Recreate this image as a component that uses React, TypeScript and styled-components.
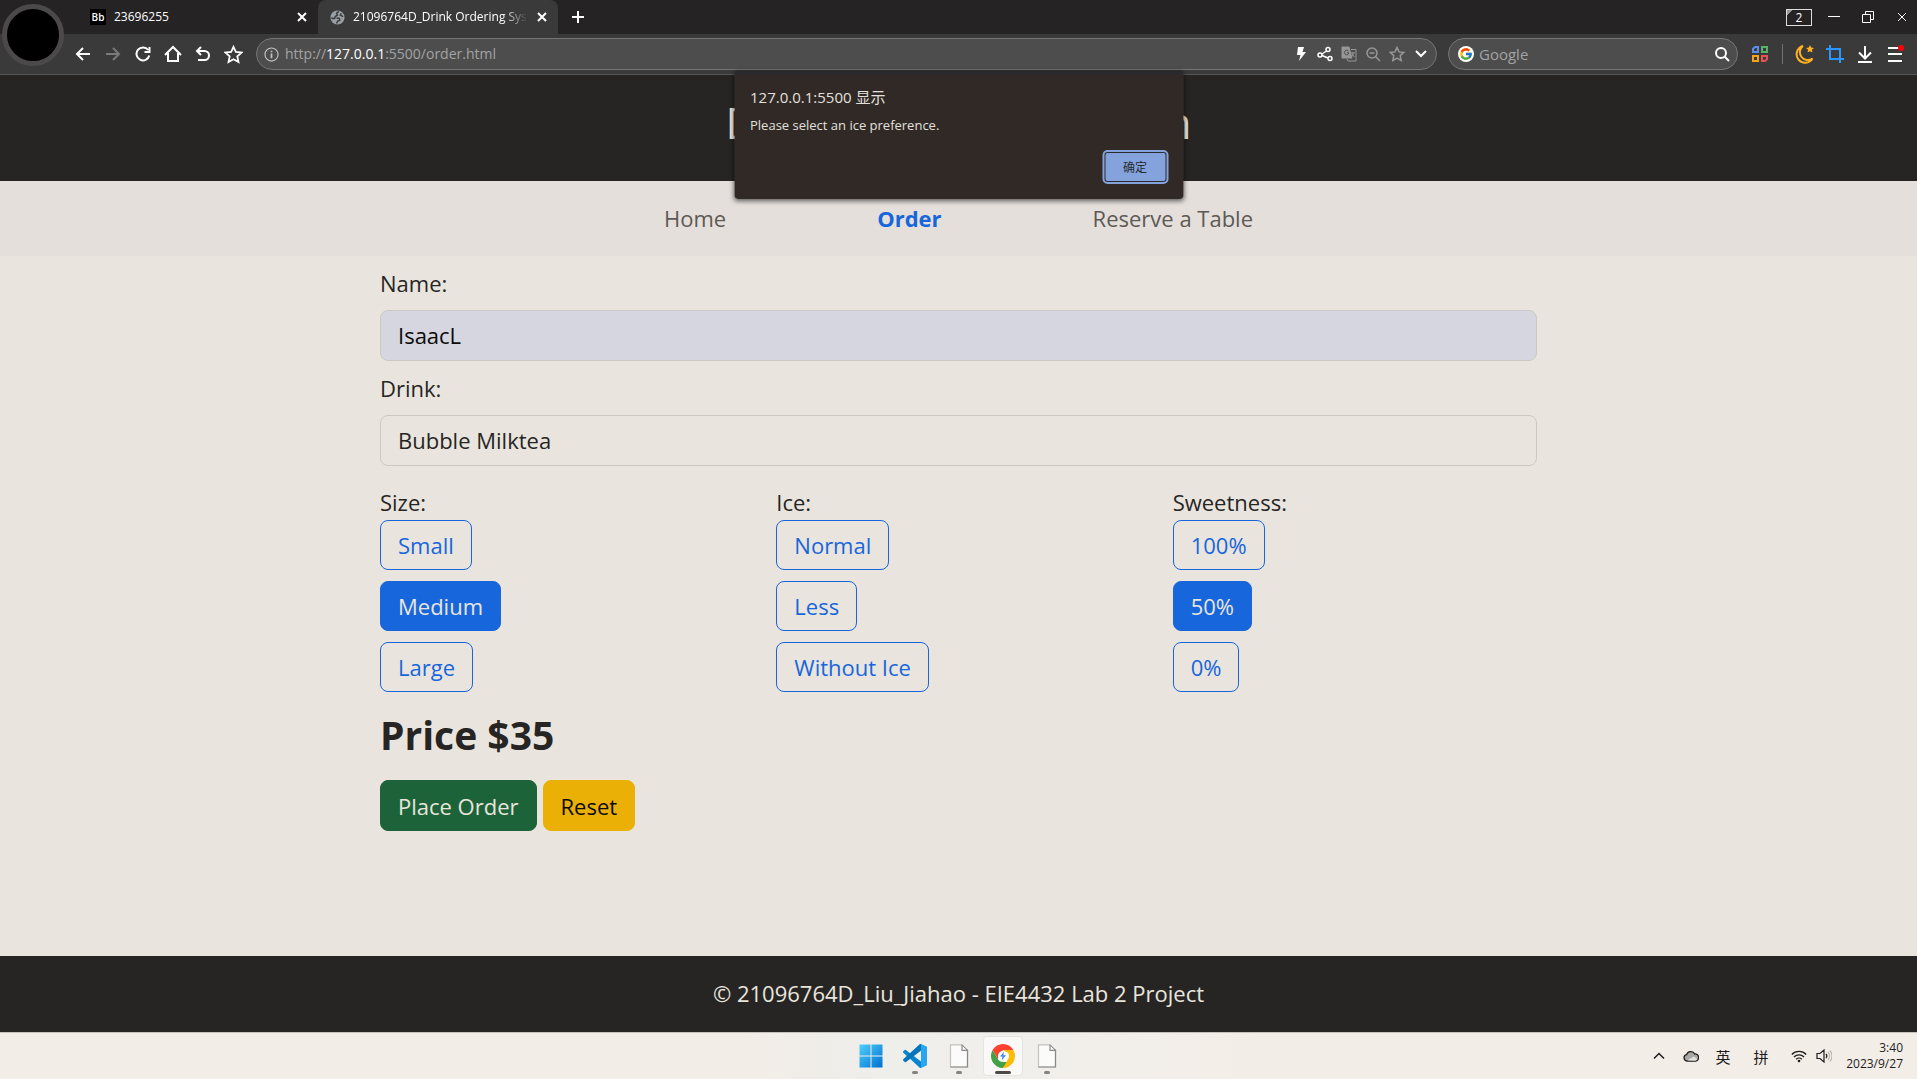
import React, { useState } from "react";
import styled, { createGlobalStyle, css } from "styled-components";
import { FcGoogle } from "react-icons/fc";

const uiFont = `"Open Sans", "Noto Sans CJK SC", sans-serif`;

const GlobalStyle = createGlobalStyle`
  *, *::before, *::after { box-sizing: border-box; }
  body { margin: 0; background: #e9e5de; font-family: ${uiFont}; }
  h1, h2, p { margin: 0; }
  button, input, select { font-family: inherit; }
`;

const Screen = styled.div`
  display: flex;
  flex-direction: column;
  min-height: 100vh;
`;

/* ---------- browser chrome ---------- */

const Browser = styled.header`
  position: relative;
  flex: none;
  color: #fff;
  background: #3a3a3a;
  border-bottom: 1px solid #555;
`;

const Avatar = styled.button`
  position: absolute;
  left: 2px;
  top: 4px;
  z-index: 1;
  width: 62px;
  height: 62px;
  padding: 0;
  border: 5px solid #4b4949;
  border-radius: 50%;
  background: #000;
`;

const TabStrip = styled.div`
  display: flex;
  align-items: stretch;
  height: 34px;
  padding-left: 80px;
  background: #252323;
`;

const Tab = styled.div<{ $active?: boolean }>`
  display: flex;
  align-items: center;
  gap: 8px;
  width: ${(p) => (p.$active ? 240 : 238)}px;
  padding: 0 10px 0 ${(p) => (p.$active ? 12 : 10)}px;
  border-radius: 8px 8px 0 0;
  background: ${(p) => (p.$active ? "#3a3a3a" : "transparent")};
`;

const TabTitle = styled.span<{ $fade?: boolean }>`
  flex: 1;
  overflow: hidden;
  white-space: nowrap;
  font-size: 12px;
  line-height: 16px;
  ${(p) =>
    p.$fade &&
    css`
      mask-image: linear-gradient(to right, #000 85%, transparent);
    `}
`;

const Badge = styled.span`
  width: 16px;
  height: 16px;
  background: #000;
  font-size: 10px;
  font-weight: 600;
  line-height: 16px;
  text-align: center;
`;

const IconButton = styled.button<{ $w?: number; $color?: string }>`
  display: flex;
  flex: none;
  align-items: center;
  justify-content: center;
  width: ${(p) => p.$w ?? 30}px;
  height: 30px;
  padding: 0;
  border: 0;
  background: none;
  color: ${(p) => p.$color ?? "#fff"};
`;

const TabClose = styled(IconButton)`
  width: 12px;
  height: 12px;
`;

const NewTab = styled(IconButton)`
  margin-left: 5px;
  height: 34px;
`;

const WindowControls = styled.div`
  display: flex;
  align-items: center;
  margin-left: auto;
  margin-right: -2px;
`;

const TabCount = styled.button`
  width: 26px;
  height: 17px;
  margin-right: 5px;
  padding: 0;
  border: 1px solid #ddd;
  background: linear-gradient(135deg, #999 4px, transparent 4px);
  color: #fff;
  font-size: 12px;
  line-height: 15px;
`;

const Toolbar = styled.div`
  display: flex;
  align-items: center;
  height: 40px;
  padding: 0 7px 0 68px;
`;

const Pill = styled.div<{ $grow?: boolean }>`
  display: flex;
  align-items: center;
  flex: ${(p) => (p.$grow ? "1" : "0 0 290px")};
  height: 32px;
  margin-left: ${(p) => (p.$grow ? 8 : 11)}px;
  padding: 0 3px 0 ${(p) => (p.$grow ? 7 : 9)}px;
  border: 1px solid #757575;
  border-radius: 16px;
  background: #4d4d4d;
`;

const Address = styled.a`
  flex: 1;
  margin-left: 6px;
  color: #a3a3a3;
  font-size: 14px;
  line-height: 20px;
  text-decoration: none;
`;

const Host = styled.span`
  color: #fff;
`;

const SearchBox = styled.input`
  flex: 1;
  min-width: 0;
  padding: 0 0 0 5px;
  border: 0;
  outline: 0;
  background: none;
  color: #fff;
  font-size: 15px;
  line-height: 20px;
  &::placeholder { color: #a3a3a3; opacity: 1; }
`;

const GoogleDisc = styled.span`
  display: flex;
  align-items: center;
  justify-content: center;
  width: 16px;
  height: 16px;
  border-radius: 50%;
  background: #fff;
`;

const Divider = styled.span`
  width: 1px;
  height: 20px;
  margin: 0 7px 0 1px;
  background: #707070;
`;

/* ---------- alert ---------- */

const Alert = styled.div`
  position: absolute;
  top: 70px;
  left: 50%;
  z-index: 5;
  display: flex;
  flex-direction: column;
  width: 449px;
  height: 129px;
  padding: 15px 17px 15px 16px;
  transform: translateX(-50%);
  border-radius: 4px;
  background: linear-gradient(#2a2a2c 5px, #302926 5px);
  box-shadow: 0 2px 5px rgba(0, 0, 0, 0.6);
  color: #e3e0dc;
`;

const AlertTitle = styled.h2`
  font-size: 15px;
  font-weight: 400;
  line-height: 24px;
`;

const AlertText = styled.p`
  margin-top: 6px;
  font-size: 13px;
  line-height: 20px;
`;

const AlertButton = styled.button`
  align-self: flex-end;
  width: 62px;
  height: 30px;
  margin: 17px 0 0;
  padding: 0;
  border: 1px solid #2b2a2d;
  border-radius: 3px;
  outline: 2px solid #84a3dc;
  background: #84a3dc;
  color: #262a33;
  font-size: 12px;
`;

/* ---------- ordering page ---------- */

const Banner = styled.header`
  display: flex;
  align-items: center;
  justify-content: center;
  height: 106px;
  padding-bottom: 12px;
  background: #272524;
  color: #e9e5de;
`;

const BannerTitle = styled.h1`
  font-size: 44px;
  font-weight: 500;
  line-height: 56px;
`;

const Nav = styled.nav`
  display: flex;
  align-items: center;
  justify-content: center;
  gap: 151px;
  height: 75px;
  padding-bottom: 2px;
  background: #e4dfdb;
`;

const NavLink = styled.a<{ $active?: boolean }>`
  color: ${(p) => (p.$active ? "#1766dc" : "#5d5955")};
  font-size: 22px;
  font-weight: ${(p) => (p.$active ? 700 : 400)};
  line-height: 36px;
  text-decoration: none;
`;

const Main = styled.main`
  flex: 1;
  width: 100%;
  max-width: 1189px;
  margin: 0 auto;
  padding: 9px 16px 32px;
  color: #272524;
`;

const FieldLabel = styled.label`
  display: block;
  margin-bottom: 9px;
  font-size: 22px;
  line-height: 36px;
`;

const control = css`
  display: block;
  width: 100%;
  height: 51px;
  margin-bottom: 9px;
  padding: 0 17px 2px;
  border: 1px solid #cbc9c5;
  border-radius: 8px;
  outline: 0;
  font-size: 22px;
  line-height: 36px;
`;

const TextField = styled.input`
  ${control}
  background: #d5d6df;
  color: #0b0b0b;
`;

const Select = styled.select`
  ${control}
  appearance: none;
  background: transparent;
  color: #272524;
`;

const Groups = styled.div`
  display: grid;
  grid-template-columns: repeat(3, 1fr);
  gap: 32px;
  margin-top: 19px;
`;

const Group = styled.fieldset`
  display: flex;
  flex-direction: column;
  align-items: flex-start;
  gap: 11px;
  min-width: 0;
  margin: 0;
  padding: 0;
  border: 0;
`;

const Legend = styled.legend`
  padding: 0;
  font-size: 22px;
  line-height: 35px;
`;

const HiddenRadio = styled.input`
  position: absolute;
  opacity: 0;
  pointer-events: none;
`;

const buttonShape = css`
  height: 50px;
  padding: 0 17px;
  border-radius: 8px;
  font-size: 22px;
  line-height: 48px;
`;

const Choice = styled.label`
  ${buttonShape}
  border: 1px solid #1766dc;
  color: #1766dc;
  &:has(input:checked) {
    background: #1766dc;
    color: #e9e5de;
  }
`;

const Price = styled.h2`
  margin: 18px 0 20px;
  font-size: 39px;
  font-weight: 700;
  line-height: 50px;
`;

const Actions = styled.div`
  display: flex;
  gap: 6px;
`;

const ActionButton = styled.button<{ $tone: "success" | "warning" }>`
  ${buttonShape}
  height: 51px;
  border: 1px solid ${(p) => (p.$tone === "success" ? "#1d6339" : "#ebb005")};
  background: ${(p) => (p.$tone === "success" ? "#1d6339" : "#ebb005")};
  color: ${(p) => (p.$tone === "success" ? "#e9e5de" : "#0b0b0b")};
`;

const Footer = styled.footer`
  flex: none;
  padding-bottom: 2px;
  background: #272524;
  color: #e9e5de;
  font-size: 22px;
  line-height: 74px;
  text-align: center;
`;

/* ---------- taskbar ---------- */

const Taskbar = styled.div`
  display: grid;
  grid-template-columns: 1fr auto 1fr;
  align-items: center;
  flex: none;
  height: 47px;
  border-top: 1px solid #c4c2be;
  background: linear-gradient(90deg, #f3ede7, #f3ede7 38%, #eeeeea 46%, #f1efeb 54%, #f3ede7 66%, #f3ede7);
  color: #1d1d1d;
`;

const Apps = styled.div`
  display: flex;
  grid-column: 2;
  gap: 4px;
`;

const AppButton = styled.button<{ $active?: boolean; $open?: boolean }>`
  display: flex;
  flex-direction: column;
  align-items: center;
  justify-content: space-between;
  width: 40px;
  height: 40px;
  padding: 7px 0 1px;
  border: 1px solid ${(p) => (p.$active ? "#e6e4e1" : "transparent")};
  border-radius: 4px;
  background: ${(p) => (p.$active ? "#faf9f7" : "none")};
  &::after {
    content: "";
    width: ${(p) => (p.$active ? 16 : 6)}px;
    height: 3px;
    border-radius: 2px;
    background: ${(p) => (p.$active ? "#4a4a4a" : p.$open ? "#858380" : "transparent")};
  }
`;

const Tray = styled.div`
  display: flex;
  align-items: center;
  justify-self: end;
  padding-right: 14px;
  font-size: 15px;
`;

const TrayButton = styled(IconButton)`
  color: #1d1d1d;
  font-size: 15px;
`;

const Clock = styled.time`
  width: 66px;
  margin-left: 4px;
  font-size: 12px;
  line-height: 16px;
  text-align: right;
`;

/* ---------- icons ---------- */

type IconProps = {
  size?: number;
  box?: number;
  sw?: number;
  children: React.ReactNode;
};

const Icon = ({ size = 16, box = 16, sw = 2, children }: IconProps) => (
  <svg
    width={size}
    height={size}
    viewBox={`0 0 ${box} ${box}`}
    fill="none"
    stroke="currentColor"
    strokeWidth={sw}
    aria-hidden="true"
  >
    {children}
  </svg>
);

const Cross = ({ size = 10, sw = 2 }) => (
  <Icon size={size} box={10} sw={sw}>
    <path d="M1 1l8 8M9 1l-8 8" />
  </Icon>
);

const Globe = () => (
  <Icon size={15}>
    <circle cx="8" cy="8" r="7.5" fill="#9aa0a6" stroke="none" />
    <path
      d="M9.500 1.500L7 3.500l1 2-2.500 1.500-.5 2H2.500L1.500 8M7 8.500l3 .5.5 2-2.500 1L7 14.500M12 3.500l-1 2 3 1.500"
      stroke="#3a3a3a"
      strokeWidth="1.500"
    />
  </Icon>
);

const starPath = "M8 1.500l2 4.400 4.800.5-3.600 3.200 1 4.800L8 12l-4.200 2.400 1-4.800L1.200 6.400 6 5.900z";

const WindowsLogo = () => (
  <svg width="24" height="24" viewBox="0 0 24 24" aria-hidden="true">
    <defs>
      <linearGradient id="win" x1="0" y1="0" x2="1" y2="1">
        <stop offset="0" stopColor="#4fd0fb" />
        <stop offset="1" stopColor="#0070d2" />
      </linearGradient>
    </defs>
    <path fill="url(#win)" d="M.5.5h11v11H.5zM12.500.5h11v11h-11zM.5 12.500h11v11H.5zM12.500 12.500h11v11h-11z" />
  </svg>
);

const CodeLogo = () => (
  <svg width="24" height="24" viewBox="0 0 24 24" aria-hidden="true">
    <path
      fill="#0a84cf"
      d="M23.15 2.587L18.21.21a1.494 1.494 0 0 0-1.705.29l-9.46 8.63-4.12-3.128a.999.999 0 0 0-1.276.057L.327 7.261A1 1 0 0 0 .326 8.740L3.899 12 .326 15.260a1 1 0 0 0 .001 1.479L1.650 17.940a.999.999 0 0 0 1.276.057l4.120-3.128 9.460 8.630a1.492 1.492 0 0 0 1.704.290l4.942-2.377A1.500 1.500 0 0 0 24 20.060V3.939a1.500 1.500 0 0 0-.850-1.352zm-5.146 14.861L10.826 12l7.178-5.448v10.896z"
    />
    <path fill="#0065a9" opacity=".5" d="M18.004.15v6.402L10.826 12 3 18 .326 15.260 16.500.5z" />
    <path fill="#2aa5f2" d="M18.004.15l5.146 2.437A1.500 1.500 0 0 1 24 3.939V20.060a1.500 1.500 0 0 1-.850 1.352l-5.146 2.437z" />
  </svg>
);

const FileIcon = () => (
  <svg width="24" height="24" viewBox="0 0 24 24" aria-hidden="true">
    <path d="M3.500.8H15l5.500 5.500V23H3.500z" fill="#fbfbfa" stroke="#c3c2c0" strokeWidth="1.200" />
    <path d="M15 .8v5.500h5.500V23H3.500" fill="none" stroke="#8b8987" strokeWidth="1.200" />
    <path d="M15 .8l5.500 5.500" stroke="#8b8987" />
  </svg>
);

const ChromeLogo = () => (
  <svg width="24" height="24" viewBox="0 0 24 24" aria-hidden="true">
    <path fill="#ff4131" d="M1.608 6A12 12 0 0 1 22.392 6H12L6.800 15z" />
    <path fill="#43a047" d="M1.608 6L6.804 15A6 6 0 0 0 12 18h5.196L12 24A12 12 0 0 1 1.608 6z" />
    <path fill="#fbbc05" d="M22.392 6A12 12 0 0 1 12 24l5.196-9A6 6 0 0 0 17.196 9L12 6z" />
    <circle cx="12" cy="12" r="5" fill="#fff" />
    <path fill="#4285f4" d="M13 7.800l-4 4.700h2.400l-.6 3.700 4.200-5h-2.600z" />
  </svg>
);

const choices = [
  { key: "size", title: "Size:", options: ["Small", "Medium", "Large"], initial: "Medium" },
  { key: "ice", title: "Ice:", options: ["Normal", "Less", "Without Ice"], initial: "" },
  { key: "sweet", title: "Sweetness:", options: ["100%", "50%", "0%"], initial: "50%" },
];

const ChoiceGroup = ({ name, title, options, initial }: { name: string; title: string; options: string[]; initial: string }) => {
  const [value, setValue] = useState(initial);
  return (
    <Group>
      <Legend>{title}</Legend>
      {options.map((o) => (
        <Choice key={o}>
          <HiddenRadio type="radio" name={name} checked={value === o} onChange={() => setValue(o)} />
          {o}
        </Choice>
      ))}
    </Group>
  );
};

const BrowserChrome = () => (
  <Browser>
    <Avatar aria-label="Profile" />
    <TabStrip>
      <Tab>
        <Badge>Bb</Badge>
        <TabTitle>23696255</TabTitle>
        <TabClose aria-label="Close tab"><Cross /></TabClose>
      </Tab>
      <Tab $active>
        <Globe />
        <TabTitle $fade>21096764D_Drink Ordering System</TabTitle>
        <TabClose aria-label="Close tab"><Cross /></TabClose>
      </Tab>
      <NewTab aria-label="New tab">
        <Icon size={12} box={12}><path d="M6 0v12M0 6h12" /></Icon>
      </NewTab>
      <WindowControls>
        <TabCount aria-label="Windows">2</TabCount>
        <IconButton $w={34} aria-label="Minimize">
          <Icon size={12} box={12} sw={1}><path d="M0 5.500h12" /></Icon>
        </IconButton>
        <IconButton $w={34} aria-label="Restore">
          <Icon size={12} box={12} sw={1}><path d="M.5 3.500h8v8h-8zM3.500 3.500v-3h8v8h-3" /></Icon>
        </IconButton>
        <IconButton $w={34} aria-label="Close"><Cross sw={1} /></IconButton>
      </WindowControls>
    </TabStrip>
    <Toolbar>
      <IconButton aria-label="Back">
        <Icon><path d="M15 8H2M8 2L2 8l6 6" /></Icon>
      </IconButton>
      <IconButton $color="#7a7a7a" aria-label="Forward">
        <Icon><path d="M1 8h13M8 2l6 6-6 6" /></Icon>
      </IconButton>
      <IconButton aria-label="Reload">
        <Icon><path d="M13.200 4A6.500 6.500 0 1 0 14.300 9.500M14.500 1v5h-5" /></Icon>
      </IconButton>
      <IconButton aria-label="Home">
        <Icon size={18} box={18}><path d="M1 10l8-8 8 8M4 8v8h10V8" /></Icon>
      </IconButton>
      <IconButton aria-label="Undo">
        <Icon><path d="M6 1L2 5l4 4M2 5h7.500a4.500 4.500 0 0 1 0 9H3" /></Icon>
      </IconButton>
      <IconButton aria-label="Favourites">
        <Icon size={19} sw={1.5}><path d={starPath} /></Icon>
      </IconButton>
      <Pill $grow>
        <Icon size={15} sw={1.2}>
          <g stroke="#c4c4c4">
            <circle cx="8" cy="8" r="7" />
            <path d="M8 7v5M8 4v1.500" strokeWidth="1.800" />
          </g>
        </Icon>
        <Address href="http://127.0.0.1:5500/order.html">
          http://<Host>127.0.0.1</Host>:5500/order.html
        </Address>
        <IconButton $w={24} aria-label="Boost">
          <Icon><path d="M5 1h6L9.500 6H13L6 15 7.500 9H4z" fill="#fff" stroke="none" /></Icon>
        </IconButton>
        <IconButton $w={24} aria-label="Share">
          <Icon sw={1.5}>
            <circle cx="3" cy="9" r="2" /><circle cx="11" cy="3.500" r="2" /><circle cx="13" cy="12.500" r="2" />
            <path d="M5 8l4.500-3M5 9.500l6 2.500" />
          </Icon>
        </IconButton>
        <IconButton $w={24} $color="#969696" aria-label="Translate">
          <Icon sw={1}>
            <path d="M1 1h7l3 11H1z" fill="#969696" />
            <path d="M10 3.500h5V15H7l-1-2M9.500 7H14M12 6v1c0 2-1 4-2 4M11 8l2.500 3" />
            <path d="M7.500 5A2.300 2.300 0 1 0 7.500 8V6.700H6" stroke="#4d4d4d" />
          </Icon>
        </IconButton>
        <IconButton $w={24} $color="#969696" aria-label="Zoom">
          <Icon sw={1.5}><circle cx="7" cy="7" r="5" /><path d="M10.500 10.500L15 15M4.500 7h5" /></Icon>
        </IconButton>
        <IconButton $w={24} $color="#969696" aria-label="Bookmark">
          <Icon sw={1.5}><path d={starPath} /></Icon>
        </IconButton>
        <IconButton $w={24} aria-label="More">
          <Icon size={12} box={12}><path d="M1 3l5 5 5-5" /></Icon>
        </IconButton>
      </Pill>
      <Pill>
        <GoogleDisc><FcGoogle size={14} /></GoogleDisc>
        <SearchBox placeholder="Google" aria-label="Google" />
        <IconButton $w={24} aria-label="Search">
          <Icon><circle cx="7" cy="7" r="5" /><path d="M10.500 10.500L15 15" /></Icon>
        </IconButton>
      </Pill>
      <IconButton $w={43} aria-label="Extensions">
        <Icon>
          <path d="M3 1h3v5H1V3z" stroke="#5b8def" /><path d="M10 1h5v5h-5z" stroke="#57b26a" />
          <path d="M1 10h5v5H1z" stroke="#f5a31a" /><path d="M10 10h5v3l-2 2h-3z" stroke="#e8505b" />
        </Icon>
      </IconButton>
      <Divider />
      <IconButton aria-label="Night mode">
        <Icon size={20} box={20}>
          <path d="M8 2a8.500 8.500 0 1 0 9.500 12.500A7.500 7.500 0 0 1 8 2z" stroke="#ffb020" />
          <path d="M15 1l1.200 2.600 2.800.3-2.100 1.900.6 2.800L15 7.200l-2.500 1.400.6-2.800L11 3.900l2.800-.3z" fill="#ffb020" stroke="none" />
        </Icon>
      </IconButton>
      <IconButton $color="#2c95ff" aria-label="Capture">
        <Icon size={18} box={18}><path d="M4 0v14h14M0 4h14v14" /></Icon>
      </IconButton>
      <IconButton aria-label="Downloads">
        <Icon size={18} box={18}><path d="M9 1v12M3 7.500l6 6 6-6M2 17h14" /></Icon>
      </IconButton>
      <IconButton aria-label="Menu">
        <Icon size={18} box={18}>
          <path d="M2 3h13M2 9h14M2 16h14" />
          <circle cx="15" cy="3" r="3" fill="#f00" stroke="none" />
        </Icon>
      </IconButton>
    </Toolbar>
    <Alert role="alertdialog" aria-labelledby="alert-title">
      <AlertTitle id="alert-title">127.0.0.1:5500 显示</AlertTitle>
      <AlertText>Please select an ice preference.</AlertText>
      <AlertButton>确定</AlertButton>
    </Alert>
  </Browser>
);

const SystemTaskbar = () => (
  <Taskbar>
    <Apps>
      <AppButton aria-label="Start"><WindowsLogo /></AppButton>
      <AppButton $open aria-label="Code editor"><CodeLogo /></AppButton>
      <AppButton $open aria-label="Document"><FileIcon /></AppButton>
      <AppButton $active aria-label="Browser"><ChromeLogo /></AppButton>
      <AppButton $open aria-label="Document"><FileIcon /></AppButton>
    </Apps>
    <Tray>
      <TrayButton $w={32} aria-label="Show hidden icons">
        <Icon size={12} box={12} sw={1.5}><path d="M1 8.500l5-5 5 5" /></Icon>
      </TrayButton>
      <TrayButton $w={32} aria-label="Cloud drive">
        <Icon sw={1.3}>
          <path d="M4 13a3.200 3.200 0 0 1-.5-6.300A4.500 4.500 0 0 1 11.800 6 3.500 3.500 0 0 1 12.500 13z" fill="#a9a8a6" />
          <path d="M4 12.500L11 8.500l3.500 3-2 1.200z" fill="#e4e2df" stroke="none" />
        </Icon>
      </TrayButton>
      <TrayButton $w={32}>英</TrayButton>
      <TrayButton $w={44}>拼</TrayButton>
      <TrayButton $w={32} aria-label="Wi-Fi">
        <Icon sw={1.3}>
          <path d="M.8 6.500a10 10 0 0 1 14.400 0M3 9a7 7 0 0 1 10 0M5.200 11.200a4 4 0 0 1 5.600 0" />
          <circle cx="8" cy="13" r="1.300" fill="#1d1d1d" stroke="none" />
        </Icon>
      </TrayButton>
      <TrayButton $w={18} aria-label="Volume">
        <Icon sw={1.2}>
          <path d="M1 5.500h3L8 2v12l-4-3.500H1zM10 6a3 3 0 0 1 0 4" />
          <path d="M12 4a6 6 0 0 1 0 8M14 2.500a9 9 0 0 1 0 11" stroke="#b5b2ae" />
        </Icon>
      </TrayButton>
      <Clock>3:40<br />2023/9/27</Clock>
    </Tray>
  </Taskbar>
);

export default function App() {
  const [name, setName] = useState("IsaacL");
  return (
    <Screen>
      <GlobalStyle />
      <BrowserChrome />
      <Banner><BannerTitle>Drink Ordering System</BannerTitle></Banner>
      <Nav>
        <NavLink href="#home">Home</NavLink>
        <NavLink href="#order" $active>Order</NavLink>
        <NavLink href="#reserve">Reserve a Table</NavLink>
      </Nav>
      <Main>
        <FieldLabel htmlFor="name">Name:</FieldLabel>
        <TextField id="name" value={name} onChange={(e) => setName(e.target.value)} />
        <FieldLabel htmlFor="drink">Drink:</FieldLabel>
        <Select id="drink"><option>Bubble Milktea</option></Select>
        <Groups>
          {choices.map((c) => (
            <ChoiceGroup key={c.key} name={c.key} title={c.title} options={c.options} initial={c.initial} />
          ))}
        </Groups>
        <Price>Price $35</Price>
        <Actions>
          <ActionButton $tone="success">Place Order</ActionButton>
          <ActionButton $tone="warning">Reset</ActionButton>
        </Actions>
      </Main>
      <Footer>© 21096764D_Liu_Jiahao - EIE4432 Lab 2 Project</Footer>
      <SystemTaskbar />
    </Screen>
  );
}
